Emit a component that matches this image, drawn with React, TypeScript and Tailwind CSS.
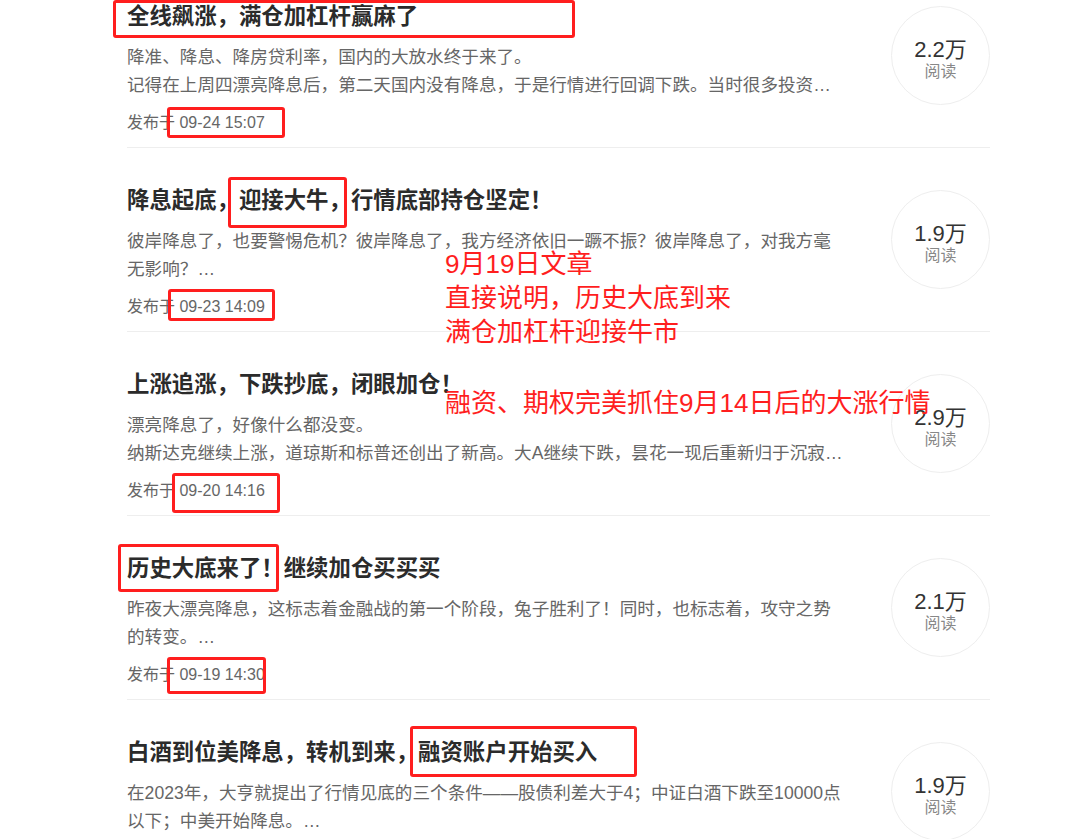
import React from 'react';

type Article = {
  title: string;
  summary: string[];
  date: string;
  reads: string;
};

const articles: Article[] = [
  {
    title: '全线飙涨，满仓加杠杆赢麻了',
    summary: [
      '降准、降息、降房贷利率，国内的大放水终于来了。',
      '记得在上周四漂亮降息后，第二天国内没有降息，于是行情进行回调下跌。当时很多投资…',
    ],
    date: '09-24 15:07',
    reads: '2.2万',
  },
  {
    title: '降息起底，迎接大牛，行情底部持仓坚定！',
    summary: ['彼岸降息了，也要警惕危机？彼岸降息了，我方经济依旧一蹶不振？彼岸降息了，对我方毫无影响？…'],
    date: '09-23 14:09',
    reads: '1.9万',
  },
  {
    title: '上涨追涨，下跌抄底，闭眼加仓！',
    summary: [
      '漂亮降息了，好像什么都没变。',
      '纳斯达克继续上涨，道琼斯和标普还创出了新高。大A继续下跌，昙花一现后重新归于沉寂…',
    ],
    date: '09-20 14:16',
    reads: '2.9万',
  },
  {
    title: '历史大底来了！继续加仓买买买',
    summary: ['昨夜大漂亮降息，这标志着金融战的第一个阶段，兔子胜利了！同时，也标志着，攻守之势的转变。…'],
    date: '09-19 14:30',
    reads: '2.1万',
  },
  {
    title: '白酒到位美降息，转机到来，融资账户开始买入',
    summary: ['在2023年，大亨就提出了行情见底的三个条件——股债利差大于4；中证白酒下跌至10000点以下；中美开始降息。…'],
    date: '09-18 14:20',
    reads: '1.9万',
  },
];

// red marker boxes drawn over the screenshot
const marks = [
  'left-[113px] top-[0px] w-[462px] h-[38px]',
  'left-[167px] top-[107px] w-[118px] h-[31px]',
  'left-[228px] top-[177px] w-[119px] h-[51px]',
  'left-[168px] top-[289px] w-[107px] h-[32px]',
  'left-[172px] top-[473px] w-[108px] h-[40px]',
  'left-[118px] top-[544px] w-[161px] h-[48px]',
  'left-[167px] top-[657px] w-[99px] h-[37px]',
  'left-[410px] top-[726px] w-[227px] h-[51px]',
];

export default function App() {
  return (
    <div className="relative h-[839px] w-[1072px] overflow-hidden bg-white font-['Liberation_Sans','Noto_Sans_CJK_SC',sans-serif]">
      {/* article list */}
      <ul className="-mt-[36px] ml-[127px] w-[863px]">
        {articles.map((a) => (
          <li key={a.date} className="flex items-center justify-between border-b border-[#eeeeee]">
            <div className="w-[720px] pt-[36px] pb-[12px]">
              <h3 className="text-[22.4px] font-bold leading-[33px] text-[#2b2b2b]">{a.title}</h3>
              <p className="mt-[10px] text-[17.6px] leading-[28px] text-[#666666]">
                {a.summary.map((line, i) => (
                  <React.Fragment key={i}>
                    {i > 0 && <br />}
                    {line}
                  </React.Fragment>
                ))}
              </p>
              <p className="mt-[12px] text-[16px] leading-[24px] text-[#666666]">发布于 {a.date}</p>
            </div>
            <div className="flex h-[99px] w-[99px] flex-col items-center rounded-full border border-[#eeeeee] pt-[31px]">
              <span className="text-[22px] leading-[24px] text-[#333333]">{a.reads}</span>
              <span className="text-[16px] leading-[20px] text-[#888888]">阅读</span>
            </div>
          </li>
        ))}
      </ul>

      {/* annotations */}
      {marks.map((m) => (
        <div key={m} className={`absolute rounded-[3px] border-[3px] border-[#ff1e1e] ${m}`} />
      ))}
      <div className="absolute left-[445px] top-[247px] text-[26px] leading-[34px] text-[#ff1e1e]">
        <p>9月19日文章</p>
        <p>直接说明，历史大底到来</p>
        <p>满仓加杠杆迎接牛市</p>
      </div>
      <div className="absolute left-[445px] top-[386px] text-[26px] leading-[34px] text-[#ff1e1e]">
        <p>融资、期权完美抓住9月14日后的大涨行情</p>
      </div>
    </div>
  );
}
